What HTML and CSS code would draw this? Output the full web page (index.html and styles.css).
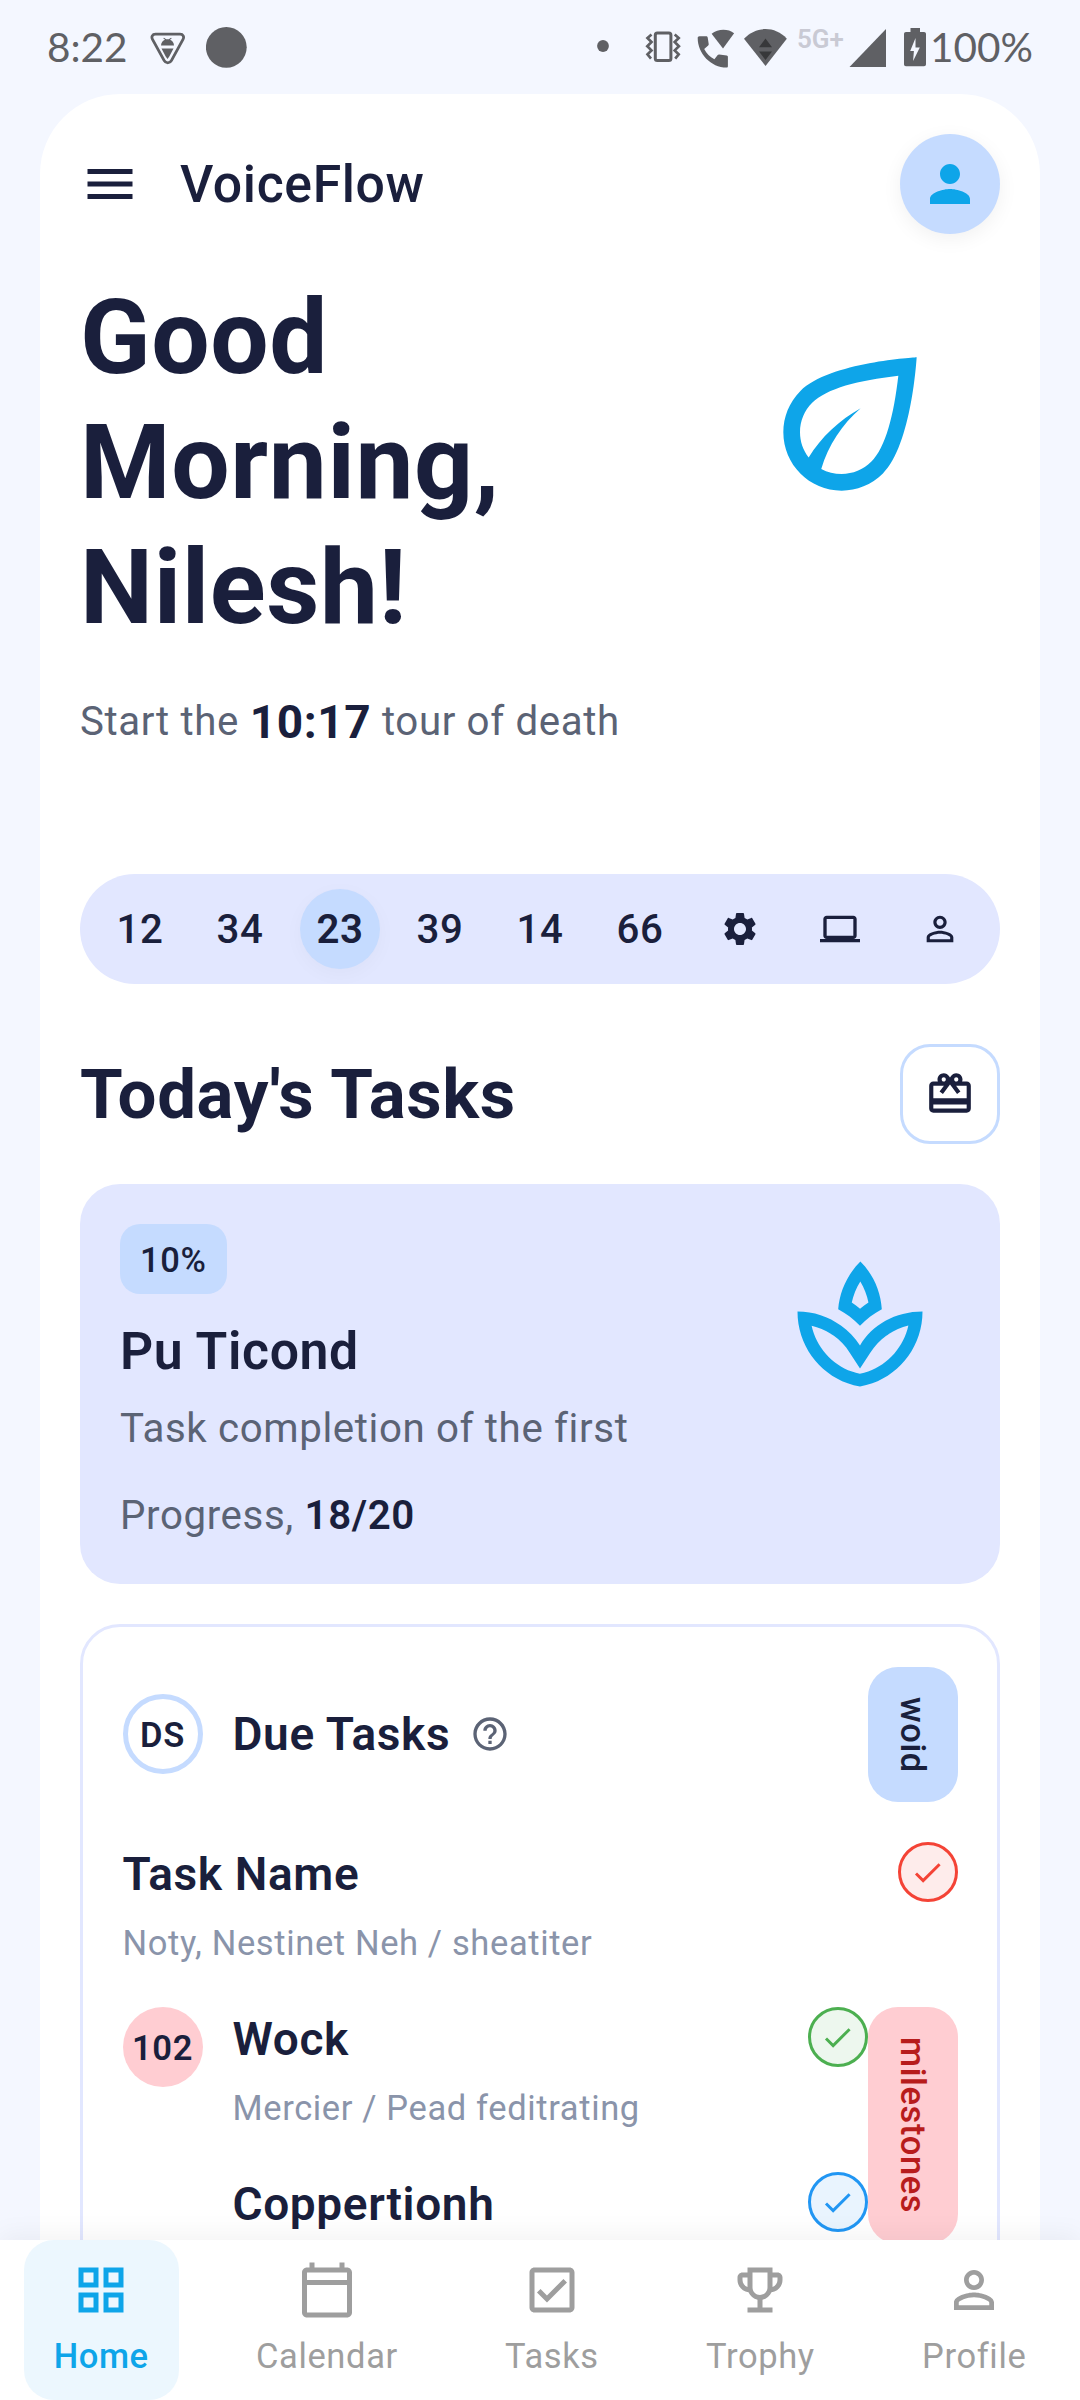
FILE: index.html
```html
<!DOCTYPE html>
<html lang="en">
<head>
<meta charset="utf-8">
<title>VoiceFlow</title>
<link rel="stylesheet" href="styles.css">
</head>
<body>
<header class="status">
  <div class="status-group">
    <span class="clock">8:22</span>
    <svg class="status-icon" width="36" height="94" viewBox="150 0 36 94"><path d="M155.500 34.200h24.500c3.200 0 4.400 2.600 3 5.200l-11.600 21.200c-1.600 2.900-5.600 2.900-7.200 0L152.500 39.400c-1.400-2.600-.2-5.200 3-5.200z" fill="none" stroke="currentColor" stroke-width="2.800"/><path d="M161 45.500c0-3 2-5 4-5.800l-1.800-1.500.8-.4 2.200 1.500h2.600l2.200-1.500.8.400-1.800 1.500c2 .8 4 2.800 4 5.800zM161.500 48.500h12l-4.200 8-1.800 2.500-1.800-2.500z" fill="currentColor"/></svg>
    <svg class="status-icon dot-lg" width="42" height="94" viewBox="206 0 42 94"><circle cx="226.300" cy="47.300" r="20.400" fill="currentColor"/></svg>
  </div>
  <div class="status-group status-right">
    <svg width="12" height="94" viewBox="597 0 12 94"><circle cx="603" cy="46" r="5.900" fill="currentColor"/></svg>
    <svg class="vibrate" width="36" height="94" viewBox="645 0 36 94"><g fill="none" stroke="currentColor"><rect x="655.300" y="33" width="15.600" height="27.500" rx="2" stroke-width="3"/><path d="M651.500 34.500l-4 3.500 4 4-4.200 4.200 4.200 4.200-4 4 3.500 4.200M674.700 34.500l4 3.500-4 4 4.200 4.200-4.200 4.200 4 4-3.500 4.200" stroke-width="2.700"/></g></svg>
    <svg class="wifi-call" width="38" height="94" viewBox="697 0 38 94"><g fill="currentColor"><path d="M723 48.500l-11.400-14.700c6.500-5.200 16.500-5.200 22.500-.5z"/><path d="M699.500 36.200h6.500c1 0 1.500.5 1.700 1.400l1 6.400c.1.600 0 1-.5 1.500l-4 3.400c2.500 4.600 5.500 8 10.200 10.300l3.300-4.200c.4-.5.9-.7 1.500-.6l7.500 1.200c.8.100 1.200.6 1.200 1.400V66c0 1-.4 1.600-1.400 1.600-15.500 0-28.800-14-28.800-29.600 0-1 .6-1.800 1.800-1.800z"/></g></svg>
    <svg class="wifi" width="44" height="94" viewBox="743 0 44 94"><path d="M765.500 66l-21.500-27.300c12-12.800 31-12.800 42.800 0z" fill="currentColor"/><path d="M759 47.300h13L765.500 38.500zM759 51.500h13L765.500 60z" fill="#37383a"/></svg>
    <span class="network">5G+</span>
    <svg class="signal" width="37" height="94" viewBox="849 0 37 94"><path d="M886 29v38h-36.500z" fill="currentColor"/></svg>
    <svg class="battery" width="22" height="94" viewBox="904 0 22 94"><path d="M910.500 28h9.500v4h4c1.200 0 2 .8 2 2v30.300c0 1.200-.8 2-2 2h-18c-1.200 0-2-.8-2-2V34c0-1.200.8-2 2-2h4.500z" fill="currentColor"/><path d="M915.500 38l-5.300 13h3.700l-.8 10 6.700-13.500h-4.300z" fill="#f4f7ff"/></svg>
    <span class="charge">100%</span>
  </div>
</header>

<main class="screen">
  <div class="topbar">
    <svg class="menu" viewBox="0 0 24 24"><path d="M3 18h18v-2H3v2zm0-5h18v-2H3v2zm0-7v2h18V6H3z"/></svg>
    <span class="brand">VoiceFlow</span>
    <span class="avatar"><svg viewBox="0 0 24 24"><path d="M12 12c2.210 0 4-1.790 4-4s-1.790-4-4-4-4 1.790-4 4 1.790 4 4 4zm0 2c-2.670 0-8 1.340-8 4v2h16v-2c0-2.660-5.330-4-8-4z"/></svg></span>
  </div>

  <section class="hero">
    <div class="hero-text">
      <h1>Good<br>Morning,<br>Nilesh!</h1>
      <p class="subtitle"><span>Start the </span><strong>10:17</strong><span> tour of death</span></p>
    </div>
    <svg class="leaf" viewBox="0 0 24 24"><path fill-rule="evenodd" d="M6.050 8.050C4.680 9.420 4 11.210 4 13c0 3.870 3.130 7 7 7 1.790 0 3.580-.68 4.950-2.050C19.430 14.470 20 4 20 4S9.530 4.570 6.050 8.050zM17.800 6.200C17.250 10.900 16.300 14.780 14.540 16.540 13.600 17.480 12.340 18 11 18c-.88 0-1.710-.21-2.450-.61.830-2.820 2.530-5.370 4.730-7.270C10.730 11.530 8.520 13.600 7.040 16.030 6.370 15.170 6 14.100 6 13c0-1.340.52-2.600 1.460-3.540C9.200 7.720 13 6.750 17.800 6.200z"/></svg>
  </section>

  <div class="days">
    <span class="day">12</span>
    <span class="day">34</span>
    <span class="day day-active">23</span>
    <span class="day">39</span>
    <span class="day">14</span>
    <span class="day">66</span>
    <span class="day"><svg viewBox="0 0 24 24"><path d="M19.140 12.940c.04-.3.060-.61.060-.94 0-.32-.02-.64-.07-.94l2.030-1.580c.18-.14.230-.41.120-.61l-1.920-3.320c-.12-.22-.37-.29-.59-.22l-2.390.96c-.5-.38-1.030-.7-1.620-.94l-.36-2.540c-.04-.24-.24-.41-.48-.41h-3.840c-.24 0-.43.170-.47.410l-.36 2.540c-.59.240-1.130.570-1.620.940l-2.390-.96c-.22-.08-.47 0-.59.220L2.740 8.870c-.12.210-.08.470.12.610l2.030 1.580c-.05.300-.09.630-.09.940s.02.640.07.940l-2.030 1.580c-.18.140-.23.410-.12.610l1.920 3.320c.12.220.37.290.59.220l2.390-.96c.5.380 1.030.7 1.620.94l.36 2.540c.05.240.24.410.48.410h3.840c.24 0 .44-.17.470-.41l.36-2.540c.59-.24 1.130-.56 1.620-.94l2.390.96c.22.080.47 0 .59-.22l1.920-3.320c.12-.22.070-.47-.12-.61l-2.010-1.580zM12 15.600c-1.980 0-3.600-1.620-3.600-3.600s1.620-3.600 3.600-3.600 3.600 1.620 3.600 3.600-1.620 3.600-3.600 3.600z"/></svg></span>
    <span class="day"><svg viewBox="0 0 24 24"><path d="M20 18c1.100 0 1.990-.9 1.990-2L22 6c0-1.100-.9-2-2-2H4c-1.100 0-2 .9-2 2v10c0 1.100.9 2 2 2H0v2h24v-2h-4zM4 6h16v10H4V6z"/></svg></span>
    <span class="day"><svg viewBox="0 0 24 24"><path d="M12 5.900c1.160 0 2.100.94 2.100 2.100s-.94 2.100-2.100 2.100S9.900 9.160 9.900 8s.94-2.100 2.100-2.100m0 9c2.970 0 6.100 1.460 6.100 2.100v1.100H5.900V17c0-.64 3.130-2.100 6.100-2.100M12 4C9.790 4 8 5.790 8 8s1.790 4 4 4 4-1.790 4-4-1.790-4-4-4zm0 9c-2.670 0-8 1.340-8 4v3h16v-3c0-2.660-5.330-4-8-4z"/></svg></span>
  </div>

  <div class="section-head">
    <h2>Today's Tasks</h2>
    <span class="gift"><svg viewBox="0 0 24 24"><path d="M20 6h-2.180c.11-.31.180-.65.180-1 0-1.660-1.340-3-3-3-1.050 0-1.960.54-2.500 1.350l-.5.670-.5-.68C10.960 2.540 10.050 2 9 2 7.340 2 6 3.340 6 5c0 .35.070.69.180 1H4c-1.110 0-1.990.89-1.990 2L2 19c0 1.110.89 2 2 2h16c1.110 0 2-.89 2-2V8c0-1.110-.89-2-2-2zm-5-2c.55 0 1 .45 1 1s-.45 1-1 1-1-.45-1-1 .45-1 1-1zM9 4c.55 0 1 .45 1 1s-.45 1-1 1-1-.45-1-1 .45-1 1-1zm11 15H4v-2h16v2zm0-5H4V8h5.080L7 10.830 8.620 12 11 8.760l1-1.360 1 1.360L15.380 12 17 10.830 14.920 8H20v6z"/></svg></span>
  </div>

  <article class="progress-card">
    <div class="progress-info">
      <span class="percent">10%</span>
      <h3>Pu Ticond</h3>
      <p class="desc">Task completion of the first</p>
      <p class="progress">Progress, <strong>18/20</strong></p>
    </div>
    <svg class="spa" viewBox="0 0 24 24"><path d="M15.490 9.630c-.18-2.790-1.310-5.510-3.430-7.630-2.140 2.140-3.320 4.860-3.550 7.630 1.280.68 2.460 1.560 3.490 2.630 1.030-1.060 2.210-1.940 3.490-2.630zm-3.440-4.440c.63 1.030 1.070 2.180 1.300 3.380-.47.300-.91.630-1.340.98-.42-.34-.87-.67-1.330-.97.250-1.200.71-2.350 1.370-3.390zM12 15.450c-.82-1.250-1.860-2.340-3.060-3.200C6.980 10.830 4.590 10 2 10c0 5.320 3.360 9.820 8.030 11.490.63.230 1.290.4 1.970.51.680-.12 1.330-.29 1.970-.51C18.640 19.820 22 15.320 22 10c-4.330 0-8.120 2.170-10 5.450zm1.320 4.150c-.44.150-.88.270-1.330.37-.44-.09-.87-.21-1.280-.36-3.290-1.180-5.700-3.990-6.450-7.350 1.100.26 2.150.71 3.120 1.330l-.02.010c.13.090.26.180.39.250l.07.040c.99.720 1.840 1.610 2.510 2.650L12 19.100l1.670-2.550c.69-1.050 1.550-1.950 2.530-2.660l.07-.05c.09-.05.180-.11.270-.17l-.01-.02c.98-.65 2.070-1.130 3.210-1.400-.75 3.370-3.150 6.180-6.420 7.350z"/></svg>
  </article>

  <article class="due-card">
    <div class="due-head">
      <span class="initials">DS</span>
      <h4>Due Tasks</h4>
      <svg class="help" viewBox="0 0 24 24"><path d="M11 18h2v-2h-2v2zm1-16C6.480 2 2 6.480 2 12s4.480 10 10 10 10-4.480 10-10S17.520 2 12 2zm0 18c-4.410 0-8-3.590-8-8s3.590-8 8-8 8 3.590 8 8-3.590 8-8 8zm0-14c-2.210 0-4 1.790-4 4h2c0-1.100.9-2 2-2s2 .9 2 2c0 2-3 1.750-3 5h2c0-2.250 3-2.500 3-5 0-2.210-1.790-4-4-4z"/></svg>
      <span class="tag">woid</span>
    </div>
    <div class="task">
      <div class="task-text"><h4>Task Name</h4><p>Noty, Nestinet Neh / sheatiter</p></div>
      <span class="check check-red"><svg viewBox="0 0 24 24"><path d="M9 16.170L4.830 12l-1.420 1.410L9 19 21 7l-1.410-1.410z"/></svg></span>
    </div>
    <div class="group">
      <span class="count">102</span>
      <div class="group-tasks">
        <div class="task">
          <div class="task-text"><h4>Wock</h4><p>Mercier / Pead feditrating</p></div>
          <span class="check check-green"><svg viewBox="0 0 24 24"><path d="M9 16.170L4.830 12l-1.420 1.410L9 19 21 7l-1.410-1.410z"/></svg></span>
        </div>
        <div class="task">
          <div class="task-text"><h4>Coppertionh</h4></div>
          <span class="check check-blue"><svg viewBox="0 0 24 24"><path d="M9 16.170L4.830 12l-1.420 1.410L9 19 21 7l-1.410-1.410z"/></svg></span>
        </div>
      </div>
      <span class="tag tag-pink">milestones</span>
    </div>
  </article>
</main>

<nav class="tabs">
  <a class="tab tab-active"><svg viewBox="0 0 24 24"><path d="M3 3v8h8V3H3zm6 6H5V5h4v4zm-6 4v8h8v-8H3zm6 6H5v-4h4v4zm4-16v8h8V3h-8zm6 6h-4V5h4v4zm-6 4v8h8v-8h-8zm6 6h-4v-4h4v4z"/></svg>Home</a>
  <a class="tab"><svg viewBox="0 0 24 24"><path d="M20 3h-1V1h-2v2H7V1H5v2H4c-1.100 0-2 .9-2 2v16c0 1.100.9 2 2 2h16c1.100 0 2-.9 2-2V5c0-1.100-.9-2-2-2zm0 18H4V10h16v11zm0-13H4V5h16v3z"/></svg>Calendar</a>
  <a class="tab"><svg viewBox="0 0 24 24"><path d="M19 3H5c-1.100 0-2 .9-2 2v14c0 1.100.9 2 2 2h14c1.100 0 2-.9 2-2V5c0-1.100-.9-2-2-2zm0 16H5V5h14v14zM17.990 9l-1.410-1.420-6.590 6.590-2.580-2.570-1.420 1.410 4 3.990z"/></svg>Tasks</a>
  <a class="tab"><svg viewBox="0 0 24 24"><path d="M19 5h-2V3H7v2H5c-1.100 0-2 .9-2 2v1c0 2.550 1.920 4.630 4.390 4.940.63 1.500 1.980 2.630 3.610 2.960V19H7v2h10v-2h-4v-3.100c1.630-.33 2.980-1.460 3.610-2.960C19.080 12.630 21 10.550 21 8V7c0-1.100-.9-2-2-2zM5 8V7h2v3.820C5.840 10.400 5 9.300 5 8zm7 6c-1.650 0-3-1.350-3-3V5h6v6c0 1.650-1.350 3-3 3zm7-6c0 1.300-.84 2.400-2 2.820V7h2v1z"/></svg>Trophy</a>
  <a class="tab"><svg viewBox="0 0 24 24"><path d="M12 5.900c1.160 0 2.100.94 2.100 2.100s-.94 2.100-2.100 2.100S9.900 9.160 9.900 8s.94-2.100 2.100-2.100m0 9c2.970 0 6.100 1.460 6.100 2.100v1.100H5.900V17c0-.64 3.130-2.100 6.100-2.100M12 4C9.790 4 8 5.790 8 8s1.790 4 4 4 4-1.790 4-4-1.790-4-4-4zm0 9c-2.670 0-8 1.340-8 4v3h16v-3c0-2.660-5.330-4-8-4z"/></svg>Profile</a>
</nav>
</body>
</html>
```
FILE: styles.css
```css
* { box-sizing: border-box; margin: 0; padding: 0; }

:root {
  --ink: #1a1f3c;
  --muted: #5b6375;
  --soft: #8a94aa;
  --blue: #0ea5e9;
  --sky: #c5dbff;
  --lavender: #e2e7ff;
}

body {
  width: 1080px;
  height: 2400px;
  overflow: hidden;
  display: flex;
  flex-direction: column;
  background: #f4f7ff;
  color: var(--ink);
  font-family: Roboto, sans-serif;
  letter-spacing: 0.625px;
}

svg { display: block; flex: none; fill: currentColor; }

/* system status bar */
.status {
  flex: none;
  height: 94px;
  display: flex;
  justify-content: space-between;
  padding: 0 48px 0 47px;
  color: #5f6064;
  letter-spacing: 0;
}
.status-group { display: flex; }
.clock, .charge {
  font-family: Lato, sans-serif;
  font-size: 40.5px;
  line-height: 94px;
}
.clock { width: 103px; }
.dot-lg { margin-left: 20px; }
.charge { margin-left: 4px; width: 102px; white-space: nowrap; line-height: 93px; }
.vibrate { margin-left: 36px; }
.wifi-call { margin-left: 16px; }
.wifi { margin-left: 8px; }
.network {
  margin-left: 10px;
  width: 46px;
  font-size: 26px;
  font-weight: 600;
  line-height: 78px;
  color: #c9cad4;
}
.signal { margin-left: 6px; }
.battery { margin-left: 18px; }

/* content sheet */
.screen {
  flex: 1;
  min-height: 0;
  overflow: hidden;
  margin: 0 40px;
  padding: 40px;
  background: #fff;
  border-radius: 80px 80px 0 0;
}

.topbar { display: flex; align-items: center; height: 100px; }
.menu { width: 60px; height: 60px; }
.brand { flex: 1; margin-left: 40px; font-size: 51.75px; font-weight: 500; }
.avatar {
  display: grid;
  place-items: center;
  width: 100px;
  height: 100px;
  border-radius: 50%;
  background: var(--sky);
  color: var(--blue);
  box-shadow: 0 5px 20px rgba(0, 0, 0, 0.06);
}
.avatar svg { width: 60px; height: 60px; }

.hero {
  display: flex;
  justify-content: space-between;
  height: 560px;
  margin-top: 40px;
  margin-bottom: 40px;
}
.hero h1 { padding-top: 1px; font-size: 103.5px; font-weight: 700; line-height: 125px; }
.subtitle {
  display: flex;
  align-items: center;
  height: 65px;
  margin-top: 39px;
  font-size: 40.25px;
  color: var(--muted);
  white-space: pre;
}
.subtitle strong { font-size: 46px; font-weight: 700; color: var(--ink); }
.leaf { width: 200px; height: 200px; margin: 50px 50px 0 0; color: var(--blue); }

.days {
  display: flex;
  justify-content: space-between;
  padding: 15px 20px;
  border-radius: 55px;
  background: var(--lavender);
}
.day {
  display: grid;
  place-items: center;
  width: 80px;
  height: 80px;
  border-radius: 50%;
  font-size: 40.25px;
  font-weight: 500;
}
.day-active {
  background: var(--sky);
  font-weight: 600;
  box-shadow: 0 5px 20px rgba(0, 0, 0, 0.03);
}
.day svg { width: 40px; height: 40px; }

.section-head {
  display: flex;
  align-items: center;
  justify-content: space-between;
  margin: 60px 0 40px;
}
.section-head h2 { padding-top: 2px; font-size: 69px; font-weight: 700; line-height: 98px; }
.gift {
  display: grid;
  place-items: center;
  width: 100px;
  height: 100px;
  border: 3px solid var(--sky);
  border-radius: 30px;
}
.gift svg { width: 50px; height: 50px; }

.progress-card {
  display: flex;
  justify-content: space-between;
  height: 400px;
  padding: 40px;
  border-radius: 40px;
  background: var(--lavender);
}
.progress-info { display: flex; flex-direction: column; align-items: flex-start; }
.percent {
  padding: 11px 20px 9px;
  border-radius: 20px;
  background: var(--sky);
  font-size: 34.5px;
  font-weight: 500;
  line-height: 50px;
}
.progress-info h3 { margin-top: 20px; font-size: 51.75px; font-weight: 600; line-height: 75px; }
.desc, .progress { font-size: 40.25px; line-height: 57.5px; color: var(--muted); }
.desc { margin-top: 11px; }
.progress { margin-top: 29px; }
.progress strong { font-weight: 600; color: var(--ink); }
.spa { width: 150px; height: 150px; margin: 25px 25px 0 0; color: var(--blue); }

.due-card {
  margin-top: 40px;
  height: 900px;
  padding: 39.5px;
  border: 3px solid var(--lavender);
  border-radius: 40px;
}
.due-card h4 { font-size: 46px; font-weight: 600; line-height: 65px; }
.due-head { display: flex; align-items: center; margin-bottom: 40px; }
.initials, .count {
  flex: none;
  display: grid;
  place-items: center;
  width: 80px;
  height: 80px;
  padding-top: 1px;
  margin-right: 30px;
  border-radius: 50%;
  font-size: 34.5px;
  font-weight: 600;
}
.initials { border: 5px solid var(--sky); }
.count { background: #ffcdd2; }
.help { width: 40px; height: 40px; margin-left: 20px; color: var(--muted); }
.tag {
  writing-mode: vertical-rl;
  flex: none;
  align-self: flex-start;
  margin-left: auto;
  padding: 30px 20px;
  border-radius: 30px;
  background: var(--sky);
  font-size: 34.5px;
  font-weight: 500;
  line-height: 50px;
}
.tag-pink { background: #ffcdd2; color: #b71c1c; margin-left: 0; }

.task { display: flex; justify-content: space-between; align-items: flex-start; height: 165px; }
.task p { margin-top: 11px; font-size: 34.5px; line-height: 50px; color: var(--soft); }
.check {
  display: grid;
  place-items: center;
  width: 60px;
  height: 60px;
  border: 3px solid currentColor;
  border-radius: 50%;
}
.check svg { width: 35px; height: 35px; }
.check-red { color: #f44336; background: #feeceb; }
.check-green { color: #4caf50; background: #edf7ee; }
.check-blue { color: #2196f3; background: #e9f4fe; }
.group { display: flex; align-items: flex-start; }
.group-tasks { flex: 1; }

/* bottom navigation */
.tabs {
  flex: none;
  z-index: 1;
  display: flex;
  justify-content: space-around;
  height: 160px;
  background: #fff;
  box-shadow: 0 -5px 25px rgba(0, 0, 0, 0.05);
}
.tab {
  display: flex;
  flex-direction: column;
  align-items: center;
  gap: 11px;
  padding: 20px 30px 19px;
  border-radius: 30px;
  font-size: 34.5px;
  line-height: 50px;
  color: #9e9e9e;
}
.tab svg { width: 60px; height: 60px; }
.tab-active { color: var(--blue); background: #ecf7fe; font-weight: 500; }
```
